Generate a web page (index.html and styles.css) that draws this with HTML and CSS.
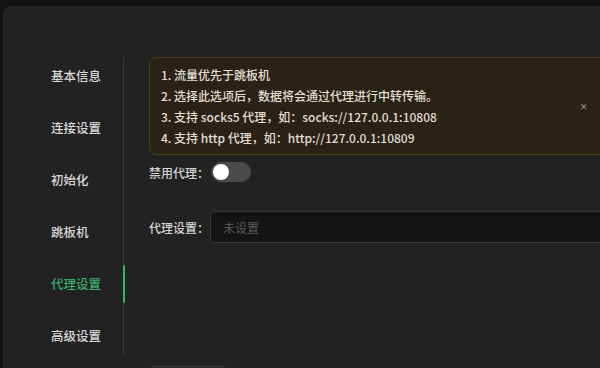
FILE: index.html
```html
<!DOCTYPE html>
<html>
<head>
  <meta charset="utf-8">
  <link rel="stylesheet" href="styles.css">
</head>
<body>
  <div class="panel">
    <ul class="side-nav">
      <li class="nav-item">基本信息</li>
      <li class="nav-item">连接设置</li>
      <li class="nav-item">初始化</li>
      <li class="nav-item">跳板机</li>
      <li class="nav-item active">代理设置</li>
      <li class="nav-item">高级设置</li>
    </ul>

    <div class="content">
      <div class="alert">
        <div class="alert-text">
          <div>1. 流量优先于跳板机</div>
          <div>2. 选择此选项后，数据将会通过代理进行中转传输。</div>
          <div>3. 支持 socks5 代理，如：socks://127.0.0.1:10808</div>
          <div>4. 支持 http 代理，如：http://127.0.0.1:10809</div>
        </div>
        <span class="alert-close">&#x2715;</span>
      </div>

      <div class="form-row toggle-row">
        <span class="form-label">禁用代理：</span>
        <span class="switch"><span class="knob"></span></span>
      </div>

      <div class="form-row input-row">
        <span class="form-label">代理设置：</span>
        <input class="text-input" type="text" placeholder="未设置">
      </div>

      <div class="btn"></div>
    </div>
  </div>
</body>
</html>
```

FILE: styles.css
```css
html, body {
  margin: 0;
  height: 100%;
  overflow: hidden;
  background-color: #121212;
  font-family: "Noto Sans CJK SC", "Noto Sans", sans-serif;
}
.panel {
  display: flex;
  margin: 6px 0 0 3px;
  height: 400px;
  background-color: #222222;
  border-radius: 8px 0 0 0;
}

/* menu kiri */
.side-nav {
  flex-shrink: 0;
  list-style: none;
  margin: 51px 0 0 0;
  padding: 0 0 0 48px;
  width: 72px;
  height: 298px;
  border-right: 1px solid #383838;
  display: flex;
  flex-direction: column;
  gap: 14px;
}
.nav-item {
  position: relative;
  height: 38px;
  line-height: 38px;
  font-size: 12.5px;
  font-weight: 500;
  color: #d8d8d8;
}
.nav-item.active {
  color: #3aaa6c;
}
.nav-item.active::after {
  content: "";
  position: absolute;
  top: 0;
  right: -2px;
  width: 2px;
  height: 38px;
  background-color: #33b36c;
  border-radius: 1px;
}

/* isi kanan */
.content {
  margin: 51px 0 0 25px;
  width: 460px;
  flex-shrink: 0;
}
.alert {
  display: flex;
  align-items: center;
  justify-content: space-between;
  box-sizing: border-box;
  height: 98px;
  padding: 7px 20px 7px 11px;
  background-color: #2a2315;
  border: 1px solid #4a3c1c;
  border-radius: 7px;
}
.alert-text {
  font-size: 12px;
  line-height: 21px;
  font-weight: 500;
  color: #e2ded4;
}
.alert-close {
  font-size: 9px;
  color: #9a948a;
}
.form-row {
  display: flex;
  align-items: center;
}
.form-label {
  font-size: 12px;
  font-weight: 500;
  color: #d4d4d4;
  white-space: nowrap;
}
.toggle-row {
  margin-top: 7px;
  height: 20px;
}
.switch {
  display: flex;
  align-items: center;
  margin-left: 2px;
  width: 40px;
  height: 20px;
  padding: 0 2px;
  box-sizing: border-box;
  background-color: #4a4a4a;
  border-radius: 10px;
}
.knob {
  width: 16px;
  height: 16px;
  background-color: #ffffff;
  border-radius: 50%;
}
.input-row {
  margin-top: 29px;
}
.text-input {
  box-sizing: border-box;
  width: 400px;
  height: 32px;
  margin-left: 1px;
  padding: 0 12px;
  background-color: #141414;
  border: 1px solid #363636;
  border-radius: 5px;
  font-family: inherit;
  font-size: 12px;
  color: #d0d0d0;
  outline: none;
}
.text-input::placeholder {
  color: #5c5c5c;
}
.btn {
  margin-top: 123px;
  width: 76px;
  height: 32px;
  background-color: #2a2a2a;
  border: 1px solid #3c3c3c;
  border-radius: 5px;
}
```
